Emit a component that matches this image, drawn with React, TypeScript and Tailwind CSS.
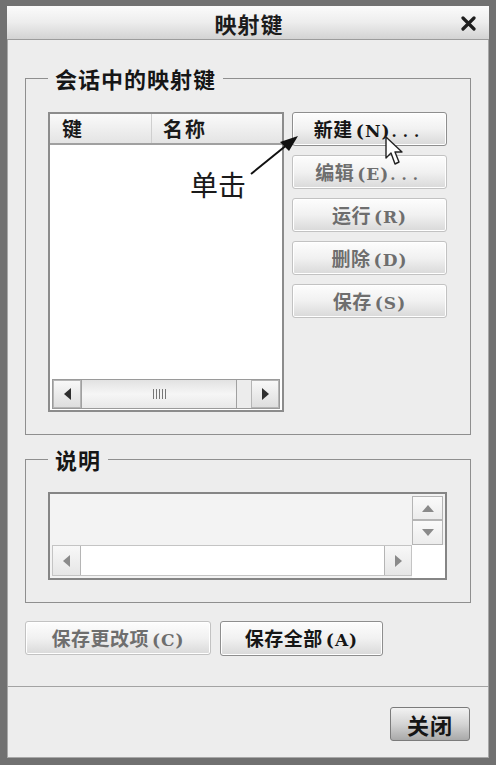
import React from "react";

const cjk = { fontFamily: '"Noto Sans CJK SC", "DejaVu Sans", sans-serif' };
const latin = { fontFamily: '"DejaVu Serif", "Liberation Serif", serif' };

type BtnProps = { label: string; mnemonic?: string; dots?: boolean; disabled?: boolean; className?: string };

const DialogButton = ({ label, mnemonic, dots, disabled, className }: BtnProps) => {
  return (
    <button
      type="button"
      style={cjk}
      className={
        "flex items-center justify-center rounded-[3px] border bg-gradient-to-b from-[#fdfdfd] via-[#f1f1f1] to-[#d9d9d9] text-[19px] font-bold leading-none tracking-[0.5px] shadow-[inset_0_0_0_1px_#ffffff] " +
        (disabled ? "border-[#c2c2c2] text-[#6e6e6e] " : "border-[#8e8e8e] text-[#161616] ") +
        (className ?? "")
      }
    >
      <span className="whitespace-nowrap">
        {label}
        {mnemonic && (
          <span style={latin} className="ml-[3px] text-[17px] tracking-[1px]">
            ({mnemonic})
          </span>
        )}
        {dots && (
          <span style={latin} className="ml-[1px] text-[15px] tracking-[6px]">
            ...
          </span>
        )}
      </span>
    </button>
  );
};

const Arrow = ({ dir, light }: { dir: "l" | "r" | "u" | "d"; light?: boolean }) => {
  const fill = light ? "#8a8a8a" : "#2e2e2e";
  const pts =
    dir === "l" ? "7,0 7,12 0,6" : dir === "r" ? "0,0 0,12 7,6" : dir === "u" ? "0,7 12,7 6,0" : "0,0 12,0 6,7";
  const w = dir === "l" || dir === "r" ? 7 : 12;
  const h = dir === "l" || dir === "r" ? 12 : 7;
  return (
    <svg width={w} height={h} viewBox={`0 0 ${w} ${h}`}>
      <polygon points={pts} fill={fill} />
    </svg>
  );
};

const ScrollBtn = ({ dir, light, className }: { dir: "l" | "r" | "u" | "d"; light?: boolean; className?: string }) => (
  <div
    className={
      "flex items-center justify-center border border-[#b5b5b5] bg-gradient-to-b from-[#f8f8f8] to-[#dedede] " + (className ?? "")
    }
  >
    <Arrow dir={dir} light={light} />
  </div>
);

export default function App() {
  return (
    <div className="relative w-[496px] h-[765px] bg-[#717171] px-[7px] pt-[6px] pb-[7px]">
      <div className="flex h-full flex-col bg-[#ededed] shadow-[inset_0_0_0_1px_#a8a8a8]">
        {/* title bar */}
        <div className="relative flex h-[34px] items-center justify-center border-b border-[#9c9c9c] bg-gradient-to-b from-[#fbfbfb] via-[#ededed] to-[#d3d3d3]">
          <span style={cjk} className="ml-[2px] text-[22px] font-bold tracking-[1px] text-[#1c1c1c] leading-none">映射键</span>
          <svg className="absolute right-[13px] top-[10px]" width="15" height="15" viewBox="0 0 15 15">
            <path d="M2 2 L13 13 M13 2 L2 13" stroke="#1e1e1e" strokeWidth="3.2" strokeLinecap="round" />
          </svg>
        </div>

        {/* group: session key maps */}
        <fieldset className="mx-[18px] mt-[26px] h-[369px] border border-[#8f8f8f] px-[22px] pt-[22px] pb-[22px]">
          <legend style={cjk} className="px-[7px] text-[22px] font-bold leading-[24px] tracking-[1px] text-[#161616]">
            会话中的映射键
          </legend>
          <div className="flex gap-[8px]">
            {/* list */}
            <div className="flex h-[300px] w-[236px] flex-col border-2 border-[#8c8c8c] bg-white">
              <div className="flex h-[31px] border-b-2 border-[#a0a0a0] bg-gradient-to-b from-[#fafafa] to-[#e4e4e4]">
                <div style={cjk} className="flex w-[102px] items-center border-r border-[#cfcfcf] pl-[12px] text-[20px] font-bold text-[#1a1a1a]">
                  键
                </div>
                <div style={cjk} className="flex flex-1 items-center pl-[11px] text-[20px] font-bold tracking-[2px] text-[#1a1a1a]">
                  名称
                </div>
              </div>
              <div className="flex-1" />
              <div className="mx-[2px] mb-[1px] flex h-[30px] border border-[#9a9a9a] bg-[#e6e6e6]">
                <ScrollBtn dir="l" className="w-[28px]" />
                <div className="flex w-[156px] items-center justify-center border-x border-[#a0a0a0] bg-gradient-to-b from-[#e2e2e2] via-[#f6f6f6] to-[#e8e8e8]">
                  <div className="flex gap-[2px]">
                    <span className="h-[10px] w-[1px] bg-[#777]" />
                    <span className="h-[10px] w-[1px] bg-[#777]" />
                    <span className="h-[10px] w-[1px] bg-[#777]" />
                    <span className="h-[10px] w-[1px] bg-[#777]" />
                    <span className="h-[10px] w-[1px] bg-[#777]" />
                  </div>
                </div>
                <div className="flex-1 bg-[#ececec]" />
                <ScrollBtn dir="r" className="w-[28px]" />
              </div>
            </div>
            {/* action buttons */}
            <div className="flex w-[155px] flex-col gap-[9px]">
              <DialogButton label="新建" mnemonic="N" dots className="h-[34px]" />
              <DialogButton label="编辑" mnemonic="E" dots disabled className="h-[34px]" />
              <DialogButton label="运行" mnemonic="R" disabled className="h-[34px]" />
              <DialogButton label="删除" mnemonic="D" disabled className="h-[34px]" />
              <DialogButton label="保存" mnemonic="S" disabled className="h-[34px]" />
            </div>
          </div>
        </fieldset>

        {/* group: description */}
        <fieldset className="mx-[18px] mt-[12px] h-[156px] border border-[#8f8f8f] px-[22px] pt-[21px] pb-[21px]">
          <legend style={cjk} className="px-[7px] text-[22px] font-bold leading-[24px] tracking-[1px] text-[#161616]">
            说明
          </legend>
          <div className="flex h-[88px] w-[399px] flex-col border-2 border-[#858585] bg-[#f3f3f3]">
            <div className="flex flex-1">
              <div className="flex-1" />
              <div className="mr-[2px] mt-[2px] flex w-[31px] flex-col">
                <ScrollBtn dir="u" light className="h-[24px] bg-gradient-to-b from-[#fafafa] to-[#ececec]" />
                <ScrollBtn dir="d" light className="h-[25px] bg-gradient-to-b from-[#fafafa] to-[#ececec]" />
              </div>
            </div>
            <div className="flex h-[33px]">
              <div className="ml-[2px] mb-[2px] flex flex-1 border border-[#c4c4c4] bg-white">
                <ScrollBtn dir="l" light className="w-[28px] border-y-0 border-l-0 bg-gradient-to-b from-[#f6f6f6] to-[#e6e6e6]" />
                <div className="flex-1 bg-white" />
                <ScrollBtn dir="r" light className="w-[27px] border-y-0 border-r-0 bg-gradient-to-b from-[#f6f6f6] to-[#e6e6e6]" />
              </div>
              <div className="w-[33px] bg-white" />
            </div>
          </div>
        </fieldset>

        {/* save buttons */}
        <div className="mx-[18px] mt-[18px] flex gap-[9px]">
          <DialogButton label="保存更改项" mnemonic="C" disabled className="h-[34px] w-[186px]" />
          <DialogButton label="保存全部" mnemonic="A" className="h-[35px] w-[163px]" />
        </div>

        <div className="mt-[30px] h-[1px] bg-[#a3a3a3]" />

        <div className="mt-[20px] flex justify-end pr-[19px]">
          <button
            type="button"
            style={cjk}
            className="flex h-[34px] w-[80px] items-center justify-center rounded-[3px] border border-[#7b7b7b] bg-gradient-to-b from-[#f2f2f2] via-[#d4d4d4] to-[#a9a9a9] text-[22px] font-bold tracking-[1px] text-[#151515]"
          >
            关闭
          </button>
        </div>
      </div>

      {/* annotation: arrow and label */}
      <svg className="absolute left-0 top-0" width="496" height="765" viewBox="0 0 496 765">
        <line x1="251" y1="174" x2="288" y2="144" stroke="#111" strokeWidth="2" />
        <polygon points="298,136 280,142 289,151" fill="#111" />
        {/* mouse cursor */}
        <path
          d="M386 137 L386 158 L391 153 L395 164 L399 162 L395 152 L402 152 Z"
          fill="#ffffff"
          stroke="#222"
          strokeWidth="1.4"
          strokeLinejoin="round"
        />
      </svg>
      <span
        style={{ fontFamily: '"Noto Sans CJK SC", serif' }}
        className="absolute left-[190px] top-[170px] text-[28px] font-normal leading-none text-[#1a1a1a]"
      >
        单击
      </span>
    </div>
  );
}
